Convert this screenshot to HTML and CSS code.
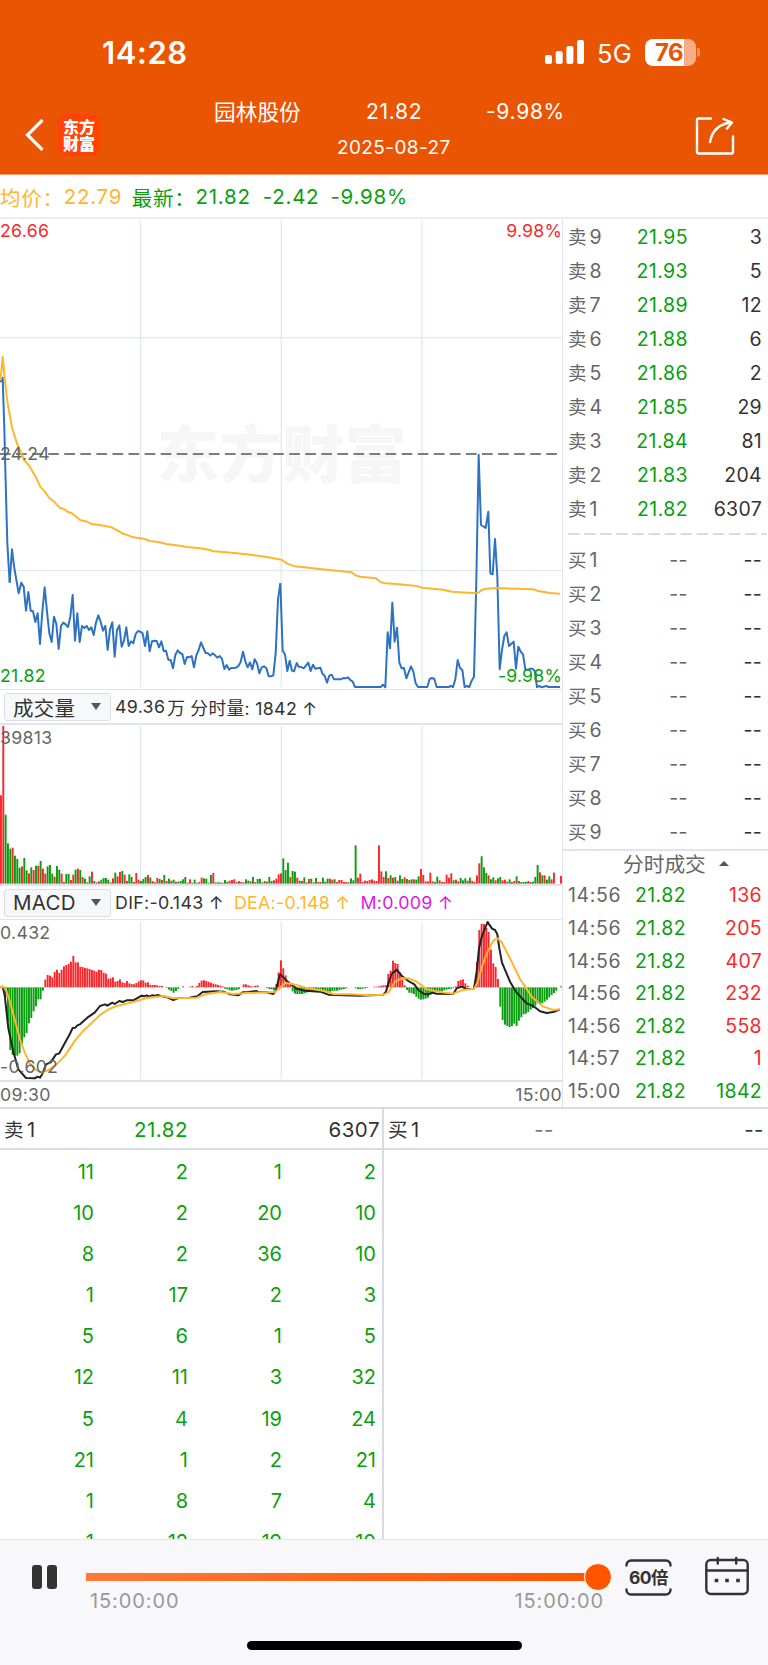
FILE: index.html
```html
<!DOCTYPE html>
<html lang="zh-CN">
<head>
    <meta charset="UTF-8">
    <title>园林股份 分时回放</title>
    <link rel="stylesheet" href="styles.css">
</head>
<body>
    <header class="header">
        <div class="status-bar">
            <span class="clock">14:28</span>
            <div class="status-right">
                <svg class="signal" width="39" height="24" viewBox="0 0 39 24" fill="#fff">
                    <rect x="0" y="15" width="7" height="9" rx="2"/>
                    <rect x="10.7" y="11" width="7" height="13" rx="2"/>
                    <rect x="21.4" y="6" width="7" height="18" rx="2"/>
                    <rect x="32" y="0" width="7" height="24" rx="2"/>
                </svg>
                <span class="network">5G</span>
                <div class="battery"><span>76</span></div>
                <span class="battery-tip"></span>
            </div>
        </div>
        <div class="nav">
            <svg class="back" width="20" height="32" viewBox="0 0 20 32" fill="none" stroke="#fff" stroke-width="3.2">
                <path d="M17.5 1L2.5 16l15 15"/>
            </svg>
            <div class="logo"><span>东方</span><span>财富</span></div>
            <div class="nav-title">
                <div class="stock">
                    <span class="stock-name">园林股份</span>
                    <span class="stock-price">21.82</span>
                    <span class="stock-rate">-9.98%</span>
                </div>
                <div class="date">2025-08-27</div>
            </div>
            <svg class="share" width="40" height="40" viewBox="0 0 40 40" fill="none" stroke="#fff" stroke-width="2.4" stroke-linecap="round" stroke-linejoin="round">
                <path d="M16 2.5H3.5A1.5 1.5 0 0 0 2 4V36A1.5 1.5 0 0 0 3.5 37.5H36.5A1.5 1.5 0 0 0 38 36V20.5"/>
                <path d="M15 26C17 15 24 8 36 6.5M28.5 3L37 6.5L32 12.5"/>
            </svg>
        </div>
    </header>

    <div class="summary">
        <span class="avg">均价：</span><span class="avg avg-value">22.79</span>
        <span class="down">最新：</span><span class="down last-value">21.82</span>
        <span class="down diff">-2.42</span>
        <span class="down">-9.98%</span>
    </div>

    <main class="quote">
        <section class="charts">
            <div class="chart price-chart">
                <div class="watermark">东方财富</div>
                <svg width="563" height="470" viewBox="0 0 1689 1410">
                    <path class="grid" d="M421.5 6V1404M844 6V1404M1266 6V1404M0 356H1689M0 1055H1689"/>
                    <path class="dash" d="M0 705H1673"/>
                    <g class="line-price">
                        <polyline points="0,488 6,486 8,476 13,628 16,753 22,973 29,1091"/>
                        <polyline transform="translate(0 753)" points="29,338 36,238 42,288 56,370 64,338 71,350 78,422 85,366 92,422 99,424 106,456 113,430 120,522 127,425 134,352 141,425 148,490 155,516 162,440 169,462 176,537 183,468 190,458 197,463 204,471 211,440 218,375 225,512 232,430 239,516 246,468 253,474 260,468 267,480 274,472 281,495 288,458 295,436 302,455 309,482 316,468 323,540 330,478 337,457 344,560 351,480 358,466 365,530 372,512 379,472 386,528 393,514 400,520 407,492 414,483 421,485 428,490 435,528 442,484 449,544 456,514 463,512 470,513 477,532 484,514 491,543 498,542 505,569 512,570 519,595 526,555 533,541 540,549 547,552 554,582 561,561 568,562 575,558 582,592 589,556 596,540 603,517 610,534 617,549 624,550 631,557 638,550 645,556 652,563 659,558 666,567 673,597 680,585 687,599 694,594 708,593 715,588 722,576 729,545 736,574 743,592 750,577 757,598 764,568 771,580 778,610 785,592 792,589 799,594 806,619 813,619 820,616 827,550 834,388 841,340"/>
                        <polyline transform="translate(840 663)" points="1,430 8,632 15,643 22,693 29,662 36,692 42,694 50,669 56,680 64,681 71,685 85,668 92,693 99,674 106,686 121,683 127,700 134,708 141,728 148,707 155,704 162,718 183,718 190,714 197,715 204,712 211,720 218,725 225,741 302,741 309,734 316,742 323,577 330,625 337,488 344,605 351,563 358,668 365,685 372,684 379,715 393,679 400,695 407,730 414,741 442,741 449,717 456,714 463,717 470,741 506,741 513,738 519,741 526,718 533,660 540,684 547,690 554,741 561,738 568,741 575,722 582,710 589,420 596,44 603,255 610,259 617,264 625,215 631,400 638,403 645,297 652,410 659,688 666,630 673,588 680,577 687,618 701,605 708,686 715,620 722,635 729,643 736,688 743,690 750,686 757,686 764,692 771,741 778,738 785,742 799,738 806,741 840,741"/>
                    </g>
                    <g class="line-avg">
                        <polyline points="0,483 4,458 8,413 14,478 22,548 36,625 50,671 72,723 86,738 95,753 108,775 122,805"/>
                        <polyline transform="translate(0 753)" points="122,52 134,64 148,84 162,95 180,114 190,116 204,126 215,129 240,150 262,155 274,162 295,164 335,172 352,181 368,191 380,194 400,202 430,206 450,213 475,216 500,222 545,228 560,231 600,235 630,240 640,244 680,247 740,253 800,261 845,269"/>
                        <polyline transform="translate(840 663)" points="5,359 10,363 22,371 45,379 120,387 155,391 215,397 226,406 240,410 288,415 298,424 315,430 350,432 410,438 425,443 490,449 515,455 590,460 596,458 604,450 618,446 650,444 760,448 775,453 810,459 840,461"/>
                    </g>
                </svg>
                <span class="label top left up">26.66</span>
                <span class="label top right up">9.98%</span>
                <span class="label middle left">24.24</span>
                <span class="label bottom left down">21.82</span>
                <span class="label bottom right down">-9.98%</span>
            </div>

            <div class="indicator">
                <div class="select">成交量<i></i></div>
                <span class="total">49.36</span>
                <span class="unit">万</span>
                <span>分时量: 1842 ↑</span>
            </div>
            <div class="chart vol-chart">
                <svg width="563" height="159" viewBox="0 0 1689 477">
                    <path class="grid" d="M421.5 3V475M844 3V475M1266 3V475"/>
                    <g id="volume"></g>
                </svg>
                <span class="label vol-max left">39813</span>
            </div>

            <div class="indicator macd-head">
                <div class="select">MACD<i></i></div>
                <span>DIF:-0.143 ↑</span>
                <span class="avg">DEA:-0.148 ↑</span>
                <span class="m">M:0.009 ↑</span>
            </div>
            <div class="chart macd-chart">
                <svg width="563" height="160" viewBox="0 0 1689 480">
                    <path class="grid" d="M421.5 6V477M844 6V477M1266 6V477"/>
                    <g id="macd"></g>
                    <g class="line-dif" transform="translate(0 -60)">
                        <polyline points="0,262 8,260 14,285 25,385 40,455 55,508 78,534 105,535 112,530 120,533 128,520 138,493 152,487 168,463 178,460 195,428 208,405 218,384 226,383 232,376 240,373 262,353 284,338 300,318 315,313 322,317 337,308 344,312 358,303 368,306 380,301 400,301 425,287 432,289 440,286 446,290 456,286 466,287 474,285 486,289 500,291 520,300 535,294 568,293 592,289 608,276 650,274 670,275 690,283 715,286 728,277 745,276 770,273 775,276 800,277 820,282 828,270 840,222"/>
                        <polyline transform="translate(840 0)" points="0,222 10,232 20,242 35,255 50,266 75,272 120,275 145,284 190,286 240,287 310,284 318,275 325,250 335,222 350,209 365,227 385,243 403,253 415,270 432,282 445,283 458,278 470,281 520,282 530,265 545,260 560,267 582,266 590,215 597,145 606,108 618,78 623,66 628,74 636,86 645,90 652,103 658,145 666,188 690,245 710,278 740,310 760,318 780,334 800,339 820,336 840,328"/>
                    </g>
                    <g class="line-avg" transform="translate(0 -60)">
                        <polyline points="0,262 10,260 18,270 30,305 45,362 60,418 75,460 90,490 108,510 125,518 145,510 170,493 195,467 225,422 250,392 275,369 300,345 325,328 350,318 400,306 440,294 490,288 520,295 590,293 620,282 660,276 700,282 740,279 825,276 840,264"/>
                        <polyline transform="translate(840 0)" points="0,264 15,248 40,253 80,264 130,272 160,282 210,283 270,286 310,284 325,278 345,245 365,235 385,235 410,245 440,268 480,276 520,281 545,271 582,266 592,250 605,203 622,156 640,122 652,115 665,127 690,175 720,237 755,290 790,320 820,330 840,328"/>
                    </g>
                </svg>
                <span class="label macd-max left">0.432</span>
                <span class="label macd-min left">-0.602</span>
            </div>
            <div class="time-axis"><span>09:30</span><span>15:00</span></div>
        </section>

        <aside class="side">
            <div class="book sell">
                <div class="book-row"><span>卖<b>9</b></span><em>21.95</em><strong>3</strong></div>
                <div class="book-row"><span>卖<b>8</b></span><em>21.93</em><strong>5</strong></div>
                <div class="book-row"><span>卖<b>7</b></span><em>21.89</em><strong>12</strong></div>
                <div class="book-row"><span>卖<b>6</b></span><em>21.88</em><strong>6</strong></div>
                <div class="book-row"><span>卖<b>5</b></span><em>21.86</em><strong>2</strong></div>
                <div class="book-row"><span>卖<b>4</b></span><em>21.85</em><strong>29</strong></div>
                <div class="book-row"><span>卖<b>3</b></span><em>21.84</em><strong>81</strong></div>
                <div class="book-row"><span>卖<b>2</b></span><em>21.83</em><strong>204</strong></div>
                <div class="book-row"><span>卖<b>1</b></span><em>21.82</em><strong>6307</strong></div>
            </div>
            <svg class="separator" width="199" height="2"><path d="M0 1H199" stroke="#cdd0d8" stroke-width="1.5" stroke-dasharray="11.5 4.6"/></svg>
            <div class="book buy">
                <div class="book-row"><span>买<b>1</b></span><em>--</em><strong>--</strong></div>
                <div class="book-row"><span>买<b>2</b></span><em>--</em><strong>--</strong></div>
                <div class="book-row"><span>买<b>3</b></span><em>--</em><strong>--</strong></div>
                <div class="book-row"><span>买<b>4</b></span><em>--</em><strong>--</strong></div>
                <div class="book-row"><span>买<b>5</b></span><em>--</em><strong>--</strong></div>
                <div class="book-row"><span>买<b>6</b></span><em>--</em><strong>--</strong></div>
                <div class="book-row"><span>买<b>7</b></span><em>--</em><strong>--</strong></div>
                <div class="book-row"><span>买<b>8</b></span><em>--</em><strong>--</strong></div>
                <div class="book-row"><span>买<b>9</b></span><em>--</em><strong>--</strong></div>
            </div>
            <div class="ticks-title">分时成交<i></i></div>
            <div class="ticks">
                <div class="tick"><span>14:56</span><em>21.82</em><strong class="up">136</strong></div>
                <div class="tick"><span>14:56</span><em>21.82</em><strong class="up">205</strong></div>
                <div class="tick"><span>14:56</span><em>21.82</em><strong class="up">407</strong></div>
                <div class="tick"><span>14:56</span><em>21.82</em><strong class="up">232</strong></div>
                <div class="tick"><span>14:56</span><em>21.82</em><strong class="up">558</strong></div>
                <div class="tick"><span>14:57</span><em>21.82</em><strong class="up">1</strong></div>
                <div class="tick"><span>15:00</span><em>21.82</em><strong class="down">1842</strong></div>
            </div>
        </aside>
    </main>

    <section class="queue">
        <div class="queue-side">
            <div class="queue-head"><span>卖<b>1</b></span><em class="down">21.82</em><strong>6307</strong></div>
            <div class="queue-grid">
                <span>11</span><span>2</span><span>1</span><span>2</span>
                <span>10</span><span>2</span><span>20</span><span>10</span>
                <span>8</span><span>2</span><span>36</span><span>10</span>
                <span>1</span><span>17</span><span>2</span><span>3</span>
                <span>5</span><span>6</span><span>1</span><span>5</span>
                <span>12</span><span>11</span><span>3</span><span>32</span>
                <span>5</span><span>4</span><span>19</span><span>24</span>
                <span>21</span><span>1</span><span>2</span><span>21</span>
                <span>1</span><span>8</span><span>7</span><span>4</span>
                <span>1</span><span>12</span><span>19</span><span>10</span>
            </div>
        </div>
        <div class="queue-side queue-buy">
            <div class="queue-head"><span>买<b>1</b></span><em>--</em><strong>--</strong></div>
        </div>
    </section>

    <footer class="player">
        <div class="controls">
            <div class="pause"><i></i><i></i></div>
            <div class="progress">
                <div class="track"></div>
                <div class="thumb"></div>
                <div class="times"><span>15:00:00</span><span>15:00:00</span></div>
            </div>
            <div class="speed">
                <svg width="47" height="37" viewBox="0 0 47 37" fill="none" stroke="#333" stroke-width="2.4" stroke-linecap="round">
                    <path d="M1.5 6.5V6A4.5 4.5 0 0 1 6 1.5H41A4.5 4.5 0 0 1 45.5 6V6.5M1.5 30.5V31A4.5 4.5 0 0 0 6 35.5H41A4.5 4.5 0 0 0 45.5 31V30.5"/>
                </svg>
                <span>60倍</span>
            </div>
            <svg class="calendar" width="44" height="40" viewBox="0 0 44 40" fill="none" stroke="#333" stroke-width="2.4" stroke-linecap="round">
                <rect x="1.3" y="4" width="41.4" height="34" rx="4.5"/>
                <path d="M1.5 14.5H42.5M12.8 2V7.5M31.2 2V7.5"/>
                <path stroke-linecap="butt" stroke-width="3.6" d="M9.7 24.5h3.6M20.2 24.5h3.6M31.2 24.5h3.6"/>
            </svg>
        </div>
        <div class="home-bar"></div>
    </footer>

    <script src="script.js"></script>
</body>
</html>
```
FILE: styles.css
```css
* {
    box-sizing: border-box;
}

body {
    margin: 0;
    width: 768px;
    height: 1665px;
    overflow: hidden;
    display: flex;
    flex-direction: column;
    background: #fff;
    color: #333;
    font-family: Inter, "Noto Sans CJK SC", sans-serif;
    font-size: 19.5px;
}

em, b, strong, i {
    font-style: normal;
    font-weight: normal;
}

.up { color: #f8282c; }
.down { color: #0a9f0e; }
.avg { color: #ffb52e; }
.m { color: #dc14e8; }

/* header */
.header {
    height: 175px;
    background: #ea5504;
    border-bottom: 1px solid #f0a074;
    color: #fff;
}

.status-bar {
    display: flex;
    justify-content: space-between;
    align-items: center;
    height: 104px;
    padding: 0 68px 0 102px;
}

.clock {
    font-size: 31px;
    font-weight: 600;
    letter-spacing: 0.6px;
}

.status-right {
    display: flex;
    align-items: center;
}

.network {
    margin: 2px 13px 0 13px;
    font-size: 25.5px;
    letter-spacing: 0.2px;
}

.battery {
    width: 51px;
    height: 27px;
    border-radius: 8px;
    background: linear-gradient(90deg, #fff 76%, #f6ae86 76%);
    color: #ea5504;
    font-size: 24px;
    font-weight: 700;
    line-height: 27px;
    letter-spacing: -0.5px;
    padding-left: 10px;
}

.battery-tip {
    width: 3px;
    height: 9px;
    margin-left: 1px;
    border-radius: 0 3px 3px 0;
    background: #f3955f;
}

.nav {
    display: flex;
    height: 70px;
    padding-left: 25px;
}

.back {
    margin-top: 15px;
}

.logo {
    display: flex;
    flex-direction: column;
    width: 42px;
    height: 42px;
    margin: 10px 0 0 13px;
    padding-top: 4px;
    border-radius: 9px;
    background: #ff4205;
    font-family: "Noto Sans CJK SC", sans-serif;
    font-size: 16px;
    font-weight: 900;
    line-height: 17px;
    text-align: center;
}

.nav-title {
    width: 595px;
    padding-left: 114px;
}

.stock {
    display: flex;
    height: 32px;
    line-height: 16px;
    font-size: 21px;
}

.stock-name {
    width: 152px;
    font-size: 21.7px;
}

.stock-price {
    width: 120px;
    letter-spacing: 0.7px;
}

.stock-rate {
    letter-spacing: 0.7px;
}

.date {
    padding-left: 123px;
    font-size: 19px;
    line-height: 24px;
    letter-spacing: 0.4px;
}

.share {
    margin: 12px 0 0 0;
}

.summary {
    display: flex;
    align-items: center;
    height: 44px;
    padding-top: 1px;
    border-bottom: 2px solid #ebecf0;
    font-size: 20.5px;
    letter-spacing: 0.75px;
}

.avg-value { width: 57px; margin: 0 11px 0 0; }
.last-value { margin: 0 12px 0 0; }
.diff { margin-right: 11px; }

/* charts */
.quote {
    display: flex;
    height: 890px;
    border-bottom: 2px solid #d9dbe2;
}

.charts {
    width: 563px;
    border-right: 1px solid #e1e4ec;
}

.chart {
    position: relative;
}

.chart svg {
    display: block;
    position: relative;
}

.grid {
    fill: none;
    stroke: #e3e7f0;
    stroke-width: 4;
}

.dash {
    stroke: #7d7d7d;
    stroke-width: 6;
    stroke-dasharray: 32 16.2;
}

.line-price, .line-avg, .line-dif {
    fill: none;
    stroke-width: 6;
    stroke-linejoin: round;
}

.line-price { stroke: #2d73c2; }
.line-avg { stroke: #ffb52e; }
.line-dif { stroke: #222; }

.bar-up { fill: #f8282c; }
.bar-down { fill: #0a9f0e; }

.price-chart {
    height: 470px;
}

.watermark {
    position: absolute;
    left: 157px;
    top: 187px;
    font-family: "Noto Sans CJK SC", sans-serif;
    font-size: 62px;
    font-weight: 900;
    line-height: 90px;
    letter-spacing: 0.5px;
    color: #f6f6f6;
}

.label {
    position: absolute;
    font-size: 17.7px;
    line-height: 20px;
    letter-spacing: 0.3px;
}

.left { left: 0; }
.right { right: 0; letter-spacing: 0.2px; }
.top { top: 2px; }
.middle { top: 225px; color: #666; }
.bottom { bottom: 3px; }
.vol-max { top: 3px; color: #666; }
.macd-max { top: 3px; color: #666; }
.macd-min { bottom: 3px; color: #666; }

.indicator {
    display: flex;
    align-items: center;
    height: 36px;
    padding-left: 4px;
    border-top: 1px solid #e1e4ec;
    border-bottom: 2px solid #e1e4ec;
    font-size: 17.8px;
    letter-spacing: 0.3px;
    white-space: nowrap;
}

.indicator > span {
    margin-right: 10px;
}

.indicator .total { margin-right: 2px; }
.indicator .unit { margin-right: 5px; }

.select {
    display: flex;
    justify-content: space-between;
    align-items: center;
    width: 107px;
    height: 28px;
    margin-right: 4px;
    padding: 0 9px 0 8px;
    border: 1px solid #dcdee4;
    border-radius: 3px;
    background: #f7f8fa;
    font-size: 20.5px;
    letter-spacing: 0.3px;
}

.select i {
    border: 5px solid transparent;
    border-top: 7px solid #555;
    border-bottom: 0;
}

.vol-chart {
    height: 159px;
}

.macd-head {
    border-top: 2px solid #e1e4ec;
    border-bottom-width: 1px;
}

.macd-chart {
    height: 160px;
}

.time-axis {
    display: flex;
    justify-content: space-between;
    border-top: 2px solid #dfe1e8;
    color: #666;
    font-size: 17.7px;
    line-height: 26px;
    letter-spacing: 0.3px;
}

/* order book */
.side {
    width: 205px;
    padding-left: 5px;
}

.book {
    padding-right: 6px;
}

.sell {
    padding-top: 2px;
}

.book-row, .tick {
    display: flex;
    height: 33.95px;
    line-height: 33.95px;
    color: #666;
}

.book-row span {
    width: 40px;
    font-size: 18.5px;
}

.book-row b {
    margin-left: 3px;
    font-size: 19.5px;
}

.book-row em {
    width: 80px;
    text-align: right;
    letter-spacing: 0.4px;
}

.sell em, .tick em {
    color: #0a9f0e;
}

.book-row strong, .tick strong {
    flex: 1;
    text-align: right;
    letter-spacing: 0.3px;
}

.book-row strong {
    color: #333;
}

.separator {
    display: block;
    margin-top: 7px;
}

.buy {
    padding-top: 9px;
    height: 314px;
}

.ticks-title {
    display: flex;
    align-items: center;
    height: 30px;
    margin-left: -5px;
    padding: 0 0 4px 60px;
    border-top: 2px solid #e1e4ec;
    color: #666;
    font-size: 20.7px;
}

.ticks-title i {
    margin-left: 13px;
    border: 5px solid transparent;
    border-bottom: 5px solid #555;
    border-top: 0;
}

.ticks {
    padding-right: 6px;
}

.tick {
    height: 32.6px;
    line-height: 32.6px;
}

.tick span {
    width: 67px;
    letter-spacing: 0.6px;
}

.tick em {
    letter-spacing: 0.4px;
}

.tick .up { color: #f8282c; }
.tick .down { color: #0a9f0e; }

/* order queue */
.queue {
    display: flex;
    height: 430px;
    overflow: hidden;
    font-size: 20px;
}

.queue-side {
    width: 384px;
    border-right: 2px solid #d9dbe2;
}

.queue-buy {
    border-right: 0;
}

.queue-head {
    display: flex;
    height: 41px;
    padding: 0 2px 0 4px;
    border-bottom: 2px solid #d9dbe2;
    line-height: 42px;
    font-size: 20.5px;
    letter-spacing: 0.5px;
}

.queue-head span { width: 60px; font-size: 19.5px; }
.queue-head b { margin-left: 3px; font-size: 20px; }
.queue-head em { width: 124px; text-align: right; }
.queue-head strong { flex: 1; text-align: right; }

.queue-buy .queue-head { padding-right: 4px; }
.queue-buy em { width: 106px; color: #777; }

.queue-grid {
    display: grid;
    grid-template-columns: repeat(4, 94px);
    grid-auto-rows: 41.1px;
    padding-top: 2px;
    line-height: 41.1px;
    text-align: right;
    color: #0a9f0e;
}

/* player */
.player {
    height: 126px;
    border-top: 1px solid #e4e5ea;
    background: #f8f8fb;
}

.controls {
    display: flex;
    height: 101px;
    padding-left: 32px;
}

.pause {
    display: flex;
    gap: 5px;
    width: 54px;
    margin-top: 25px;
}

.pause i {
    width: 10px;
    height: 24px;
    border-radius: 3px;
    background: #333;
}

.progress {
    position: relative;
    width: 526px;
    padding-top: 33px;
}

.track {
    width: 505px;
    height: 8px;
    background: linear-gradient(90deg, #ff7a38, #ff5500);
}

.thumb {
    position: absolute;
    right: 0;
    top: 23px;
    width: 28px;
    height: 28px;
    border: 1px solid #fff;
    border-radius: 50%;
    background: #ff5500;
}

.times {
    display: flex;
    justify-content: space-between;
    padding: 8px 8px 0 4px;
    color: #999;
    font-size: 20px;
    line-height: 24px;
    letter-spacing: 0.9px;
}

.speed {
    position: relative;
    width: 47px;
    height: 37px;
    margin: 19px 0 0 13px;
}

.speed span {
    position: absolute;
    left: 0;
    right: 0;
    top: 7px;
    font-size: 17.5px;
    font-weight: 700;
    line-height: 24px;
    text-align: center;
    letter-spacing: -0.5px;
}

.calendar {
    margin: 16px 0 0 33px;
}

.home-bar {
    width: 275px;
    height: 9px;
    margin: 0 auto;
    border-radius: 5px;
    background: #000;
}
```
FILE: script.js
```js
var SVG = 'http://www.w3.org/2000/svg';
var STEP = 7;

// one entry per minute, minus = green
var volume = [265, 473, -207, -121, -105, 108, -84, -74, -48, 52, -77, -40, 31, -49, 41, -54, 54, -68, 45, 30,
    -52, -56, -30, 21, -53, -42, 30, 5, -29, -29, 11, 27, -42, 45, -41, 20, -15, -4, -22, 36,
    -8, 4, 7, -12, -17, -17, -12, 4, 16, -33, 22, 35, -38, 27, 8, -28, -20, 5, 32, 12,
    -8, -14, -20, 26, -18, 8, 4, 17, -14, 11, -26, 8, -15, 9, -12, 6, -6, -8, -13, -20,
    3, 13, -3, -12, 3, 5, 18, -16, -15, 3, -26, 32, -4, -4, -4, 3, -11, -6, 9, 11,
    13, -5, 8, 5, 4, -13, -9, 7, -20, 5, -14, -15, 4, -8, 6, -20, -8, 10, 15, 28,
    31, -76, -41, -63, 20, -38, -36, 18, -9, 8, -19, 4, 14, -15, 4, -17, 5, 5, -18, -6,
    -15, 15, 12, -13, 5, 11, 11, 5, 5, 4, -16, -10, -115, 18, 30, 5, 9, 8, 11, 13,
    9, 8, 115, 37, 20, -37, 17, -25, 18, -20, 9, -25, -14, 19, -14, 11, -13, 13, -12, -22,
    44, 26, 7, 7, 33, 7, -5, -21, 10, 5, 5, 27, 18, 31, -10, 12, 7, -17, -10, -16,
    9, -18, 8, 5, 25, 61, -82, -49, -32, 25, -13, -19, 10, -16, -20, 10, 12, 6, -13, 5,
    8, -22, 8, -5, -5, -5, 8, 5, -6, -20, -56, 34, -25, 25, -12, -22, 13, 33, 0, 0, 23];

var macd = [0, 0, -30, -105, -188, -203, -205, -205, -198, -172, -150, -137, -108, -92, -72, -57, -36, -36, -10, 23,
    37, 35, 30, 46, 53, 43, 53, 63, 67, 70, 77, 94, 75, 75, 62, 61, 58, 57, 55, 52,
    50, 47, 53, 52, 44, 41, 26, 27, 30, 17, 19, 24, 15, 13, 19, 12, 10, 9, 13, 18,
    21, 21, 14, 15, 7, 7, 7, 6, 4, 4, 0, -2, -7, -11, -16, -11, -5, 0, 3, 0,
    0, 2, 4, -1, 4, 13, 20, 21, 19, 17, 14, 11, 9, 7, 5, 3, -4, -6, -9, -10,
    -9, -8, -5, 0, 9, 9, 6, 4, 2, 5, 6, 0, 0, 0, -2, -5, -6, -8, 10, 45,
    81, 57, 36, 16, 8, -12, -19, -20, -20, -20, -18, -16, -14, -12, -12, -12, -12, -12, -11, -13,
    -14, -13, -11, -10, -10, -8, -7, -5, -3, 0, 0, 0, -3, -5, -5, -4, -3, -2, 0, 0,
    2, 2, 3, 5, 6, 6, 40, 50, 80, 73, 70, 45, 23, 6, -8, -16, -17, -20, -28, -34,
    -37, -36, -34, -31, -22, -16, -14, -13, -12, -11, -9, -7, -5, -4, -2, 3, 19, 22, 24, 12,
    5, 0, 0, 8, 76, 172, 190, 190, 178, 166, 113, 72, 61, 25, -58, -98, -112, -116, -119, -116,
    -109, -116, -100, -90, -81, -79, -74, -67, -62, -55, -48, -50, -48, -43, -37, -30, -23, -17, -10, 0, 3];

function drawBar(parent, i, y, height, up) {
    var rect = document.createElementNS(SVG, 'rect');
    rect.setAttribute('x', i * STEP);
    rect.setAttribute('y', y);
    rect.setAttribute('width', 5.8);
    rect.setAttribute('height', height);
    rect.setAttribute('class', up ? 'bar-up' : 'bar-down');
    parent.appendChild(rect);
}

var volumeElement = document.getElementById('volume');
volume.forEach(function (v, i) {
    var h = Math.abs(v);
    drawBar(volumeElement, i, 476 - h, h, v > 0);
});

var macdElement = document.getElementById('macd');
macd.forEach(function (v, i) {
    drawBar(macdElement, i, v > 0 ? 202 - v : 202, Math.abs(v), v > 0);
});
```
